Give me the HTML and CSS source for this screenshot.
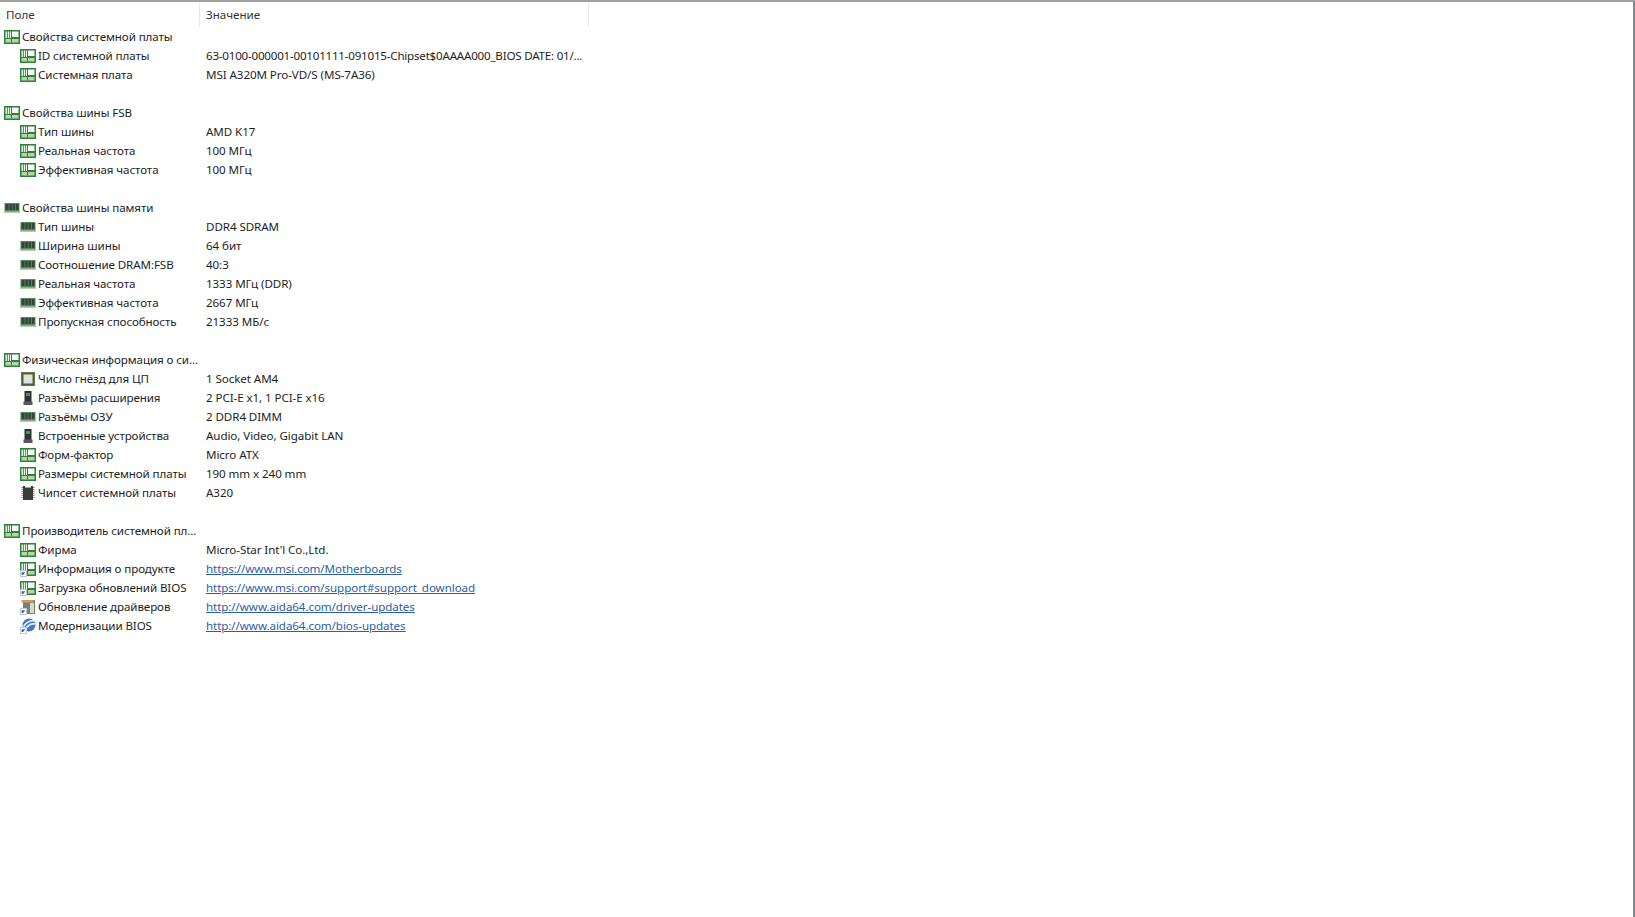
FILE: index.html
```html
<!DOCTYPE html>
<html lang="ru">
<head>
<meta charset="utf-8">
<title>Системная плата</title>
<link rel="stylesheet" href="styles.css">
</head>
<body>
<svg class="sprite" width="0" height="0" aria-hidden="true">
  <defs>
    <symbol id="mb" viewBox="0 0 16 16">
      <rect x="0" y="1" width="16" height="14" fill="#2c8238"/>
      <rect x="1.5" y="2.5" width="1.4" height="6.5" fill="#f4f8f2"/>
      <rect x="3.8" y="2.5" width="1.4" height="6.5" fill="#f4f8f2"/>
      <rect x="6" y="2.5" width="1" height="6.5" fill="#f4f8f2"/>
      <rect x="8" y="2.5" width="6.5" height="5.5" fill="#f7faf5"/>
      <rect x="1.5" y="10" width="13" height="3.5" fill="#b4d6a4"/>
      <rect x="7" y="10" width="1" height="3.5" fill="#2c8238"/>
    </symbol>
    <symbol id="ram" viewBox="0 0 16 16">
      <rect x="0.5" y="3" width="15" height="10" fill="#4a9058"/>
      <rect x="1.5" y="4" width="3" height="6" fill="#3c403e"/>
      <rect x="5.3" y="4" width="2.5" height="6" fill="#3c403e"/>
      <rect x="8.6" y="4" width="2.5" height="6" fill="#3c403e"/>
      <rect x="12" y="4" width="2.5" height="6" fill="#3c403e"/>
      <rect x="0.5" y="11.5" width="15" height="1.5" fill="#bccdab"/>
    </symbol>
    <symbol id="cpu" viewBox="0 0 16 16">
      <rect x="1" y="1" width="14" height="14" fill="#47663a"/>
      <rect x="1.5" y="1.5" width="13" height="13" fill="none" stroke="#a89a50" stroke-width="0.7" stroke-dasharray="1 1"/>
      <rect x="3.5" y="3.5" width="9" height="9" fill="#dfe3df"/>
    </symbol>
    <symbol id="slot" viewBox="0 0 16 16">
      <rect x="4.5" y="1" width="7" height="11" fill="#2d3230"/>
      <rect x="6" y="3" width="4" height="3" fill="#3f9a58"/>
      <rect x="3.5" y="11.5" width="9" height="3.5" fill="#55595a"/>
    </symbol>
    <symbol id="chip" viewBox="0 0 16 16">
      <rect x="3" y="1" width="10" height="14" fill="#3a3c3e"/>
      <rect x="5" y="1" width="6" height="1.6" fill="#e8e8e8"/>
      <path d="M1.5 2.5h1.5M1.5 4.5h1.5M1.5 6.5h1.5M1.5 8.5h1.5M1.5 10.5h1.5M1.5 12.5h1.5M13 2.5h1.5M13 4.5h1.5M13 6.5h1.5M13 8.5h1.5M13 10.5h1.5M13 12.5h1.5" stroke="#8a8a8a" stroke-width="1"/>
    </symbol>
    <symbol id="link" viewBox="0 0 16 16">
      <rect x="0.5" y="9.5" width="6" height="6" fill="#fff" stroke="#c4c8ce" stroke-width="1"/>
      <path d="M2.2 14v-2.300h2M2.600 13.600l2-2.200" fill="none" stroke="#2a62b8" stroke-width="1.100"/>
    </symbol>
    <symbol id="driver" viewBox="0 0 16 16">
      <rect x="3" y="1" width="12" height="14" fill="#7c7f78"/>
      <rect x="1.5" y="1" width="12" height="2.5" fill="#c9a04e"/>
      <rect x="10" y="4" width="4" height="10" fill="#d8d8d0"/>
    </symbol>
    <symbol id="bios" viewBox="0 0 16 16">
      <circle cx="9" cy="7" r="6.5" fill="#3f78c4"/>
      <path d="M3.5 8.5C6 4 11 2 14.5 3M5 11.5C8 7 12 5.5 15 6" fill="none" stroke="#eaf2fb" stroke-width="1.6"/>
    </symbol>
  </defs>
</svg>

<main class="window">
  <header class="head">
    <div class="hcell hcell-field">Поле</div>
    <div class="hcell hcell-value">Значение</div>
  </header>

  <section class="list">
    <div class="row top"><svg class="ico"><use href="#mb"/></svg><span class="f">Свойства системной платы</span></div>
    <div class="row"><div class="name"><svg class="ico"><use href="#mb"/></svg><span class="f">ID системной платы</span></div><div class="val tight">63-0100-000001-00101111-091015-Chipset$0AAAA000_BIOS DATE: 01/...</div></div>
    <div class="row"><div class="name"><svg class="ico"><use href="#mb"/></svg><span class="f">Системная плата</span></div><div class="val">MSI A320M Pro-VD/S (MS-7A36)</div></div>
    <div class="row"></div>

    <div class="row top"><svg class="ico"><use href="#mb"/></svg><span class="f">Свойства шины FSB</span></div>
    <div class="row"><div class="name"><svg class="ico"><use href="#mb"/></svg><span class="f">Тип шины</span></div><div class="val">AMD K17</div></div>
    <div class="row"><div class="name"><svg class="ico"><use href="#mb"/></svg><span class="f">Реальная частота</span></div><div class="val">100 МГц</div></div>
    <div class="row"><div class="name"><svg class="ico"><use href="#mb"/></svg><span class="f">Эффективная частота</span></div><div class="val">100 МГц</div></div>
    <div class="row"></div>

    <div class="row top"><svg class="ico"><use href="#ram"/></svg><span class="f">Свойства шины памяти</span></div>
    <div class="row"><div class="name"><svg class="ico"><use href="#ram"/></svg><span class="f">Тип шины</span></div><div class="val">DDR4 SDRAM</div></div>
    <div class="row"><div class="name"><svg class="ico"><use href="#ram"/></svg><span class="f">Ширина шины</span></div><div class="val">64 бит</div></div>
    <div class="row"><div class="name"><svg class="ico"><use href="#ram"/></svg><span class="f">Соотношение DRAM:FSB</span></div><div class="val">40:3</div></div>
    <div class="row"><div class="name"><svg class="ico"><use href="#ram"/></svg><span class="f">Реальная частота</span></div><div class="val">1333 МГц (DDR)</div></div>
    <div class="row"><div class="name"><svg class="ico"><use href="#ram"/></svg><span class="f">Эффективная частота</span></div><div class="val">2667 МГц</div></div>
    <div class="row"><div class="name"><svg class="ico"><use href="#ram"/></svg><span class="f">Пропускная способность</span></div><div class="val">21333 МБ/с</div></div>
    <div class="row"></div>

    <div class="row top"><svg class="ico"><use href="#mb"/></svg><span class="f">Физическая информация о си...</span></div>
    <div class="row"><div class="name"><svg class="ico"><use href="#cpu"/></svg><span class="f">Число гнёзд для ЦП</span></div><div class="val">1 Socket AM4</div></div>
    <div class="row"><div class="name"><svg class="ico"><use href="#slot"/></svg><span class="f">Разъёмы расширения</span></div><div class="val">2 PCI-E x1, 1 PCI-E x16</div></div>
    <div class="row"><div class="name"><svg class="ico"><use href="#ram"/></svg><span class="f">Разъёмы ОЗУ</span></div><div class="val">2 DDR4 DIMM</div></div>
    <div class="row"><div class="name"><svg class="ico"><use href="#slot"/></svg><span class="f">Встроенные устройства</span></div><div class="val">Audio, Video, Gigabit LAN</div></div>
    <div class="row"><div class="name"><svg class="ico"><use href="#mb"/></svg><span class="f">Форм-фактор</span></div><div class="val">Micro ATX</div></div>
    <div class="row"><div class="name"><svg class="ico"><use href="#mb"/></svg><span class="f">Размеры системной платы</span></div><div class="val">190 mm x 240 mm</div></div>
    <div class="row"><div class="name"><svg class="ico"><use href="#chip"/></svg><span class="f">Чипсет системной платы</span></div><div class="val">A320</div></div>
    <div class="row"></div>

    <div class="row top"><svg class="ico"><use href="#mb"/></svg><span class="f">Производитель системной пл...</span></div>
    <div class="row"><div class="name"><svg class="ico"><use href="#mb"/></svg><span class="f">Фирма</span></div><div class="val">Micro-Star Int'l Co.,Ltd.</div></div>
    <div class="row"><div class="name"><svg class="ico"><use href="#mb"/><use href="#link"/></svg><span class="f">Информация о продукте</span></div><div class="val"><a href="#">https://www.msi.com/Motherboards</a></div></div>
    <div class="row"><div class="name"><svg class="ico"><use href="#mb"/><use href="#link"/></svg><span class="f">Загрузка обновлений BIOS</span></div><div class="val"><a href="#">https://www.msi.com/support#support_download</a></div></div>
    <div class="row"><div class="name"><svg class="ico"><use href="#driver"/><use href="#link"/></svg><span class="f">Обновление драйверов</span></div><div class="val"><a href="#">http://www.aida64.com/driver-updates</a></div></div>
    <div class="row"><div class="name"><svg class="ico"><use href="#bios"/><use href="#link"/></svg><span class="f">Модернизации BIOS</span></div><div class="val"><a href="#">http://www.aida64.com/bios-updates</a></div></div>
  </section>
</main>
</body>
</html>
```

FILE: styles.css
```css
* { box-sizing: border-box; }

html, body {
  margin: 0;
  height: 100%;
  background: #fff;
}

body {
  font-family: "Noto Sans", "Open Sans", "Liberation Sans", sans-serif;
  font-size: 11.6px;
  color: #1e1e1e;
  overflow: hidden;
}

.sprite { display: block; }

.window {
  height: 917px;
  width: 1635px;
  border-top: 2px solid #a0a0a0;
  border-right: 2px solid #85858f;
}

.head {
  display: flex;
  height: 25px;
  padding-top: 1px;
}

.hcell {
  display: flex;
  align-items: center;
  height: 24px;
  padding: 0 0 2px 6px;
  border-right: 1px solid #e6e6e6;
  color: #333;
}

.hcell-field { width: 200px; }
.hcell-value { width: 389px; }

.list { display: flex; flex-direction: column; }

.row {
  display: flex;
  align-items: center;
  height: 19px;
  white-space: nowrap;
}

.top { padding-left: 4px; }

.name {
  display: flex;
  align-items: center;
  width: 206px;
  padding-left: 20px;
}

.ico {
  flex: none;
  width: 16px;
  height: 16px;
  margin-right: 2px;
}

.f, .val {
  padding-bottom: 1px;
  letter-spacing: -0.1px;
}

.val { letter-spacing: -0.08px; }
.val.tight { letter-spacing: -0.22px; }

a { color: #2d5da6; }
```
